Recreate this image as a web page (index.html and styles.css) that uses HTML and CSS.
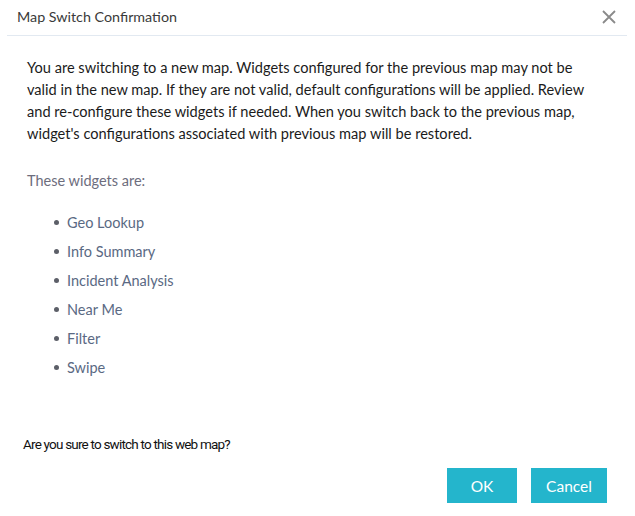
FILE: index.html
```html
<!DOCTYPE html>
<html>
<head>
<meta charset="utf-8">
<link rel="stylesheet" href="styles.css">
</head>
<body>
<div class="dialog">
  <div class="header">
    <span class="title">Map Switch Confirmation</span>
    <svg class="close" width="14" height="14" viewBox="0 0 14 14"><path d="M1 1L13 13M13 1L1 13" stroke="#8a8a8a" stroke-width="1.8" fill="none"/></svg>
  </div>
  <div class="content">
    <p class="intro">You are switching to a new map. Widgets configured for the previous map may not be valid in the new map. If they are not valid, default configurations will be applied. Review and re&#8209;configure these widgets if needed. When you switch back to the previous map, widget's configurations associated with previous map will be restored.</p>
    <p class="label">These widgets are:</p>
    <ul class="widgets">
      <li>Geo Lookup</li>
      <li>Info Summary</li>
      <li>Incident Analysis</li>
      <li>Near Me</li>
      <li>Filter</li>
      <li>Swipe</li>
    </ul>
  </div>
  <p class="question">Are you sure to switch to this web map?</p>
  <div class="actions">
    <button class="btn ok">OK</button>
    <button class="btn cancel">Cancel</button>
  </div>
</div>
</body>
</html>
```
FILE: styles.css
```css
html, body {
  margin: 0;
  padding: 0;
  background: #ffffff;
}
.dialog {
  width: 635px;
  height: 516px;
  padding: 0 8px 0 7px;
  box-sizing: border-box;
  font-family: Lato, "Open Sans", sans-serif;
}
.header {
  height: 36px;
  box-sizing: border-box;
  border-bottom: 1px solid #e2e9f1;
  display: flex;
  align-items: center;
  justify-content: space-between;
  padding: 0 11px 0 10px;
}
.title {
  font-size: 14.3px;
  color: #3a3a3a;
  margin-top: -2px;
}
.close {
  margin-top: -2px;
}
.content {
  padding: 21px 26px 0 20px;
}
.intro {
  margin: 0;
  font-size: 14.6px;
  line-height: 22px;
  color: #1b1b1b;
}
.label {
  margin: 25px 0 0 0;
  font-size: 14.5px;
  line-height: 22px;
  color: #6d6d7d;
}
.widgets {
  margin: 16px 0 0 0;
  padding: 0 0 0 40px;
  list-style: none;
}
.widgets li {
  font-size: 14.5px;
  line-height: 29px;
  color: #5a6983;
  position: relative;
}
.widgets li::before {
  content: "";
  position: absolute;
  left: -13px;
  top: 12px;
  width: 5px;
  height: 5px;
  border-radius: 50%;
  background: #5c5f68;
}
.question {
  margin: 51px 0 0 16px;
  font-family: Roboto, "Liberation Sans", Arial, sans-serif;
  font-size: 13.5px;
  letter-spacing: -0.8px;
  line-height: 22px;
  color: #111111;
}
.actions {
  display: flex;
  justify-content: flex-end;
  gap: 14px;
  margin-top: 13px;
  padding-right: 20px;
}
.btn {
  height: 35px;
  border: none;
  background: #24b5cc;
  color: #ffffff;
  font-family: Lato, Roboto, sans-serif;
  font-size: 15.5px;
  padding: 0;
  cursor: pointer;
}
.ok { width: 70px; }
.cancel { width: 76px; }
```
